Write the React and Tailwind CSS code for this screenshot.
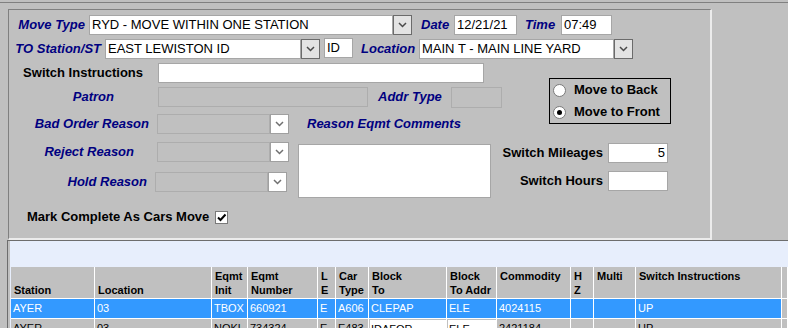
import React from "react";

const lbl = "font-bold italic text-[13px] text-[#000080] whitespace-nowrap";
const blk = "font-bold text-[13px] text-black whitespace-nowrap";

function Input({ className = "", value = "", right = false, off = false }) {
  return (
    <div
      className={`h-[20px] border text-[13px] leading-[18px] px-[2px] text-black whitespace-nowrap overflow-hidden ${
        off ? "bg-[#c0c0c0] border-[#adadad]" : "bg-white border-[#a6a6a6]"
      } ${right ? "text-right" : ""} ${className}`}
    >
      {value}
    </div>
  );
}

function Drop({ off = false }) {
  return (
    <div
      className={`w-[19px] h-[20px] shrink-0 flex items-center justify-center border ${
        off ? "bg-white border-[#a0a0a0]" : "bg-[#e3e3e3] border-[#6b6b6b]"
      }`}
    >
      <svg width="9" height="6" viewBox="0 0 9 6">
        <path d="M1 1l3.5 3.5L8 1" fill="none" stroke={off ? "#707070" : "#4a4a4a"} strokeWidth="1.5" />
      </svg>
    </div>
  );
}

function Radio({ on }) {
  return (
    <div className="w-[13px] h-[13px] rounded-full bg-white border border-[#7a7a7a] flex items-center justify-center">
      {on && <div className="w-[5px] h-[5px] rounded-full bg-black" />}
    </div>
  );
}

const cols = [
  { w: 84, h: ["", "Station"] },
  { w: 117, h: ["", "Location"] },
  { w: 36, h: ["Eqmt", "Init"] },
  { w: 70, h: ["Eqmt", "Number"] },
  { w: 18, h: ["L", "E"] },
  { w: 33, h: ["Car", "Type"] },
  { w: 78, h: ["Block", "To"] },
  { w: 50, h: ["Block", "To Addr"] },
  { w: 74, h: ["Commodity"] },
  { w: 23, h: ["H", "Z"] },
  { w: 42, h: ["Multi"] },
  { w: 146, h: ["Switch Instructions"] },
  { w: 6, h: [""] },
];

const rows = [
  { sel: true, cells: ["AYER", "03", "TBOX", "660921", "E", "A606", "CLEPAP", "ELE", "4024115", "", "", "UP", ""] },
  { sel: false, cells: ["AYER", "03", "NOKL", "734324", "E", "E483", "IDAFOR", "ELE", "2421184", "", "", "UP", ""] },
];

export default function App() {
  return (
    <div className="w-[788px] h-[328px] overflow-hidden bg-[#c0c0c0] font-['Liberation_Sans',Arial,sans-serif]">
      <div className="mt-[2px] border-t border-[#808080]" />

      {/* form panel */}
      <div className="ml-[8px] mt-[6px] w-[704px] h-[231px] border-l border-t border-[#808080] border-r-2 border-b-2 border-r-[#ececec] border-b-[#ececec] pt-[5px]">
        {/* Move type row */}
        <div className="flex items-center h-[20px]">
          <div className={`w-[80px] text-right pr-[4px] ${lbl}`}>Move Type</div>
          <Input className="w-[304px]" value="RYD - MOVE WITHIN ONE STATION" />
          <Drop />
          <div className={`w-[42px] pl-[9px] ${lbl}`}>Date</div>
          <Input className="w-[63px]" value="12/21/21" />
          <div className={`w-[44px] pl-[8px] ${lbl}`}>Time</div>
          <Input className="w-[51px]" value="07:49" />
        </div>

        {/* station row */}
        <div className="flex items-center h-[20px] mt-[4px]">
          <div className={`w-[96px] text-right pr-[4px] ${lbl}`}>TO Station/ST</div>
          <Input className="w-[196px]" value="EAST LEWISTON ID" />
          <Drop />
          <Input className="w-[29px] ml-[4px] -mt-[2px] leading-[16px]" value="ID" />
          <div className={`w-[66px] pl-[8px] ${lbl}`}>Location</div>
          <Input className="w-[195px]" value="MAIN T - MAIN LINE YARD" />
          <Drop />
        </div>

        <div className="flex mt-[4px]">
          {/* left block */}
          <div className="w-[494px]">
            <div className="flex items-center h-[20px]">
              <div className={`w-[149px] text-right pr-[15px] ${blk}`}>Switch Instructions</div>
              <Input className="w-[326px]" />
            </div>
            <div className="flex items-center h-[20px] mt-[4px]">
              <div className={`w-[149px] text-right pr-[44px] ${lbl}`}>Patron</div>
              <Input className="w-[210px]" off />
              <div className={`w-[83px] pl-[10px] ${lbl}`}>Addr Type</div>
              <Input className="w-[51px] h-[21px]" off />
            </div>

            <div className="flex mt-[7px]">
              <div className="w-[280px]">
                <div className="flex items-center h-[20px]">
                  <div className={`w-[148px] text-right pr-[8px] ${lbl}`}>Bad Order Reason</div>
                  <Input className="w-[113px]" off />
                  <Drop off />
                </div>
                <div className="flex items-center h-[20px] mt-[8px]">
                  <div className={`w-[148px] text-right pr-[23px] ${lbl}`}>Reject Reason</div>
                  <Input className="w-[113px]" off />
                  <Drop off />
                </div>
                <div className="flex items-center h-[20px] mt-[10px]">
                  <div className={`w-[146px] text-right pr-[8px] ${lbl}`}>Hold Reason</div>
                  <Input className="w-[113px]" off />
                  <Drop off />
                </div>
              </div>
              <div className="ml-[9px]">
                <div className={`h-[20px] flex items-center pl-[9px] ${lbl}`}>Reason Eqmt Comments</div>
                <div className="mt-[10px] w-[193px] h-[54px] bg-white border border-[#a6a6a6]" />
              </div>
            </div>
          </div>

          {/* right block */}
          <div>
            <div className="ml-[46px] mt-[15px] w-[122px] border border-black px-[3px]">
              <div className="flex items-center h-[22px] gap-[8px]">
                <Radio on={false} />
                <span className={blk}>Move to Back</span>
              </div>
              <div className="flex items-center h-[22px] gap-[8px]">
                <Radio on />
                <span className={blk}>Move to Front</span>
              </div>
            </div>
            <div className="flex items-center h-[20px] mt-[19px]">
              <div className={`w-[105px] flex justify-end pr-[5px] ${blk}`}>Switch Mileages</div>
              <Input className="w-[60px]" value="5" right />
            </div>
            <div className="flex items-center h-[20px] mt-[8px]">
              <div className={`w-[105px] flex justify-end pr-[5px] ${blk}`}>Switch Hours</div>
              <Input className="w-[60px]" />
            </div>
          </div>
        </div>

        {/* mark complete */}
        <div className="flex items-center h-[20px] mt-[9px] ml-[18px] gap-[6px]">
          <span className={blk}>Mark Complete As Cars Move</span>
          <div className="w-[13px] h-[13px] bg-white border border-[#7a7a7a] flex items-center justify-center">
            <svg width="11" height="11" viewBox="0 0 11 11">
              <path d="M2 5.5l2.5 2.5L9.5 2.5" fill="none" stroke="#000" strokeWidth="2" />
            </svg>
          </div>
        </div>
      </div>

      {/* lower grid area */}
      <div className="ml-[7px] border-t border-l border-[#6d6d6d] pl-[2px]">
        <div className="bg-[#e7eefc] pl-[1px]">
          <div className="h-[26px]" />
          <div className="flex bg-[#c0c0c0] text-[11px] leading-[14px] font-bold text-black">
            {cols.map((c, i) => (
              <div
                key={i}
                style={{ width: c.w }}
                className={`h-[32px] shrink-0 border-r border-b border-white pl-[3px] pt-[2px] flex flex-col whitespace-nowrap overflow-hidden ${
                  c.h[0] === "" ? "justify-end pb-[1px]" : ""
                }`}
              >
                {c.h.filter((t) => t !== "").map((t, j) => (
                  <div key={j}>{t}</div>
                ))}
              </div>
            ))}
          </div>
          {rows.map((r, ri) => (
            <div key={ri} className="flex text-[11px] leading-[19px]">
              {r.cells.map((t, i) => {
                const last = i === r.cells.length - 1;
                const box = !r.sel && (i === 6 || i === 7);
                return (
                  <div
                    key={i}
                    style={{ width: cols[i].w }}
                    className={`h-[20px] shrink-0 border-r border-b border-white whitespace-nowrap overflow-hidden ${
                      r.sel && !last ? "bg-[#3399ff] text-white" : "bg-[#c0c0c0] text-black"
                    } ${box ? "pt-[1px] pl-[1px]" : "pl-[2px]"}`}
                  >
                    {box ? <div className="bg-white h-full pl-[1px] leading-[18px]">{t}</div> : t}
                  </div>
                );
              })}
            </div>
          ))}
        </div>
      </div>
    </div>
  );
}
